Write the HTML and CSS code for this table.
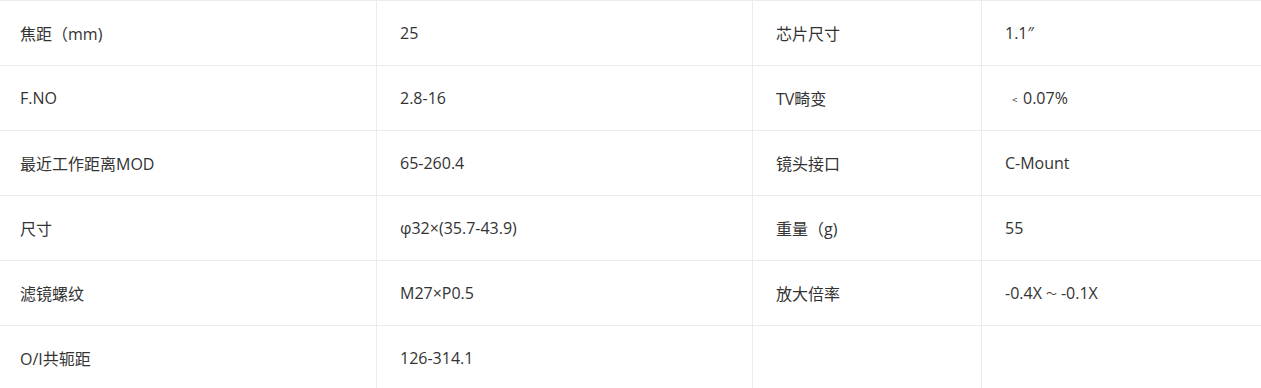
FILE: index.html
```html
<!DOCTYPE html>
<html lang="zh-CN">
<head>
<meta charset="utf-8">
<title>参数</title>
<link rel="stylesheet" href="styles.css">
</head>
<body>
<div class="spec">
  <div class="cell first">焦距（mm)</div>
  <div class="cell">25</div>
  <div class="cell">芯片尺寸</div>
  <div class="cell">1.1″</div>

  <div class="cell first">F.NO</div>
  <div class="cell">2.8-16</div>
  <div class="cell">TV畸变</div>
  <div class="cell"><span class="lt">﹤</span>0.07%</div>

  <div class="cell first">最近工作距离MOD</div>
  <div class="cell">65-260.4</div>
  <div class="cell">镜头接口</div>
  <div class="cell">C-Mount</div>

  <div class="cell first">尺寸</div>
  <div class="cell">φ32×(35.7-43.9)</div>
  <div class="cell">重量（g)</div>
  <div class="cell">55</div>

  <div class="cell first">滤镜螺纹</div>
  <div class="cell">M27×P0.5</div>
  <div class="cell">放大倍率</div>
  <div class="cell">-0.4X<span class="tilde">～</span>-0.1X</div>

  <div class="cell first">O/I共轭距</div>
  <div class="cell">126-314.1</div>
  <div class="cell"></div>
  <div class="cell"></div>
</div>
</body>
</html>
```

FILE: styles.css
```css
html, body {
  margin: 0;
  padding: 0;
  background: #ffffff;
}

body {
  font-family: "Open Sans", "Noto Sans CJK SC", sans-serif;
  font-size: 16px;
  color: #333333;
  overflow: hidden;
}

.spec {
  display: grid;
  grid-template-columns: 376px 376px 229px 280px;
  border-top: 1px solid #ececec;
  width: 1261px;
}

.cell {
  box-sizing: border-box;
  height: 65px;
  display: flex;
  align-items: center;
  border-bottom: 1px solid #ececec;
  border-left: 1px solid #ececec;
  padding-left: 23px;
  padding-bottom: 1px;
  white-space: nowrap;
}

.cell.first {
  border-left: none;
  padding-left: 20px;
}

.lt {
  font-family: "Noto Sans CJK SC", sans-serif;
  font-size: 12px;
  margin-left: 4px;
  margin-right: 2px;
}

.tilde {
  font-family: "Noto Sans CJK SC", sans-serif;
  font-size: 11px;
  margin: 0 4px;
}
```
